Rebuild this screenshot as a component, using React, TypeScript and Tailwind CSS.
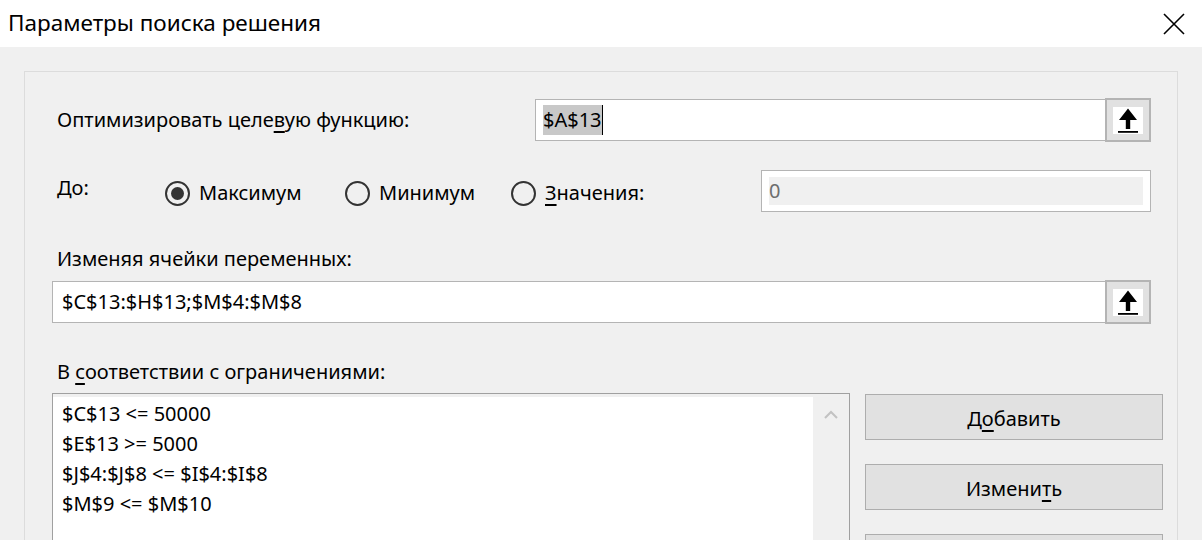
import React from "react";

const font = "font-['Noto_Sans','Open_Sans',sans-serif]";

function RefButton() {
  return (
    <div className="-my-px -mr-px flex h-[44px] w-[46px] shrink-0 items-center justify-center border-2 border-[#b4b4b4] bg-[#e1e1e1]">
      <div className="flex h-[27px] w-[30px] items-center justify-center bg-white">
        <svg width="30" height="27" viewBox="0 0 30 27">
          <polygon points="15,1.5 6,13 12.8,13 12.8,22 17.2,22 17.2,13 24,13" fill="#000" />
          <rect x="5" y="24" width="20" height="1.8" fill="#000" />
        </svg>
      </div>
    </div>
  );
}

function Radio({ checked, label, w }: { checked?: boolean; label: React.ReactNode; w: string }) {
  return (
    <div className={`flex items-center gap-[9px] ${w}`}>
      <span className="flex h-[25px] w-[25px] items-center justify-center rounded-full border-2 border-[#333]">
        {checked && <span className="h-[13px] w-[13px] rounded-full bg-[#333]" />}
      </span>
      <span>{label}</span>
    </div>
  );
}

function Btn({ children }: { children?: React.ReactNode }) {
  return (
    <div className="flex h-[46px] w-[298px] items-center justify-center border border-[#adadad] bg-[#e1e1e1] pt-[3px]">
      {children}
    </div>
  );
}

export default function App() {
  const constraints = [
    "$C$13 <= 50000",
    "$E$13 >= 5000",
    "$J$4:$J$8 <= $I$4:$I$8",
    "$M$9 <= $M$10",
  ];

  return (
    <div className={`${font} h-[540px] w-[1202px] overflow-hidden bg-[#f0f0f0] text-[20px] text-black`}>
      {/* title bar */}
      <div className="flex h-[47px] items-center justify-between bg-white pl-[8px] pr-[17px]">
        <span className="text-[22.5px] leading-none">Параметры поиска решения</span>
        <svg width="22" height="22" viewBox="0 0 22 22">
          <path d="M1 1 L21 21 M21 1 L1 21" stroke="#000" strokeWidth="1.6" />
        </svg>
      </div>

      <div className="pl-[24px] pr-[24px] pt-[24px]">
        <div className="h-[600px] border border-[#dcdcdc] pl-[27px] pr-[13px] pt-[27px]">
          {/* target */}
          <div className="flex h-[42px] items-center pr-[13px]">
            <span className="flex-1 pl-[5px]">
              Оптимизировать целе<span className="underline underline-offset-4">в</span>ую функцию:
            </span>
            <div className="flex h-[42px] w-[616px] items-center border border-[#b4b4b4] bg-white">
              <div className="flex flex-1 items-center pl-[7px]">
                <span className="bg-[#c8c8c8] leading-[30px]">$A$13</span>
                <span className="h-[30px] w-px bg-black" />
              </div>
              <RefButton />
            </div>
          </div>

          {/* to */}
          <div className="mt-[29px] flex h-[42px] items-center pr-[13px]">
            <span className="-mt-[6px] w-[113px] pl-[5px]">До:</span>
            <div className="flex pt-[4px]">
              <Radio checked w="w-[180px]" label="Максимум" />
              <Radio w="w-[166px]" label="Минимум" />
              <Radio
                w="w-auto"
                label={
                  <>
                    <span className="underline underline-offset-4">З</span>начения:
                  </>
                }
              />
            </div>
            <div className="ml-auto flex h-[42px] w-[390px] items-center border border-[#b4b4b4] bg-white px-[7px]">
              <div className="flex h-[28px] w-full items-center bg-[#f0f0f0] text-[#6d6d6d]">0</div>
            </div>
          </div>

          {/* variables */}
          <div className="mt-[35px] pl-[5px] leading-[24px]">Изменяя ячейки переменных:</div>
          <div className="mr-[13px] mt-[10px] flex h-[42px] items-center border border-[#b4b4b4] bg-white">
            <span className="flex-1 pl-[9px]">$C$13:$H$13;$M$4:$M$8</span>
            <RefButton />
          </div>

          {/* constraints */}
          <div className="mt-[37px] pl-[5px] leading-[24px]">
            В <span className="underline underline-offset-4">с</span>оответствии с ограничениями:
          </div>
          <div className="mt-[9px] flex gap-[15px]">
            <div className="flex h-[170px] w-[798px] border border-[#a0a0a0] bg-[#f0f0f0] pt-[3px]">
              <div className="flex-1 bg-white pl-[9px] pt-[2px]">
                {constraints.map((c) => (
                  <div key={c} className="leading-[30px]">
                    {c}
                  </div>
                ))}
              </div>
              <div className="flex w-[36px] justify-center pt-[13px]">
                <svg width="14" height="9" viewBox="0 0 14 9">
                  <path d="M1 8 L7 2 L13 8" stroke="#c2c2c2" strokeWidth="2" fill="none" />
                </svg>
              </div>
            </div>
            <div className="flex flex-col gap-[24px] pt-[1px]">
              <Btn>
                Д<span className="underline underline-offset-4">о</span>бавить
              </Btn>
              <Btn>
                Измени<span className="underline underline-offset-4">т</span>ь
              </Btn>
              <Btn />
            </div>
          </div>
        </div>
      </div>
    </div>
  );
}
